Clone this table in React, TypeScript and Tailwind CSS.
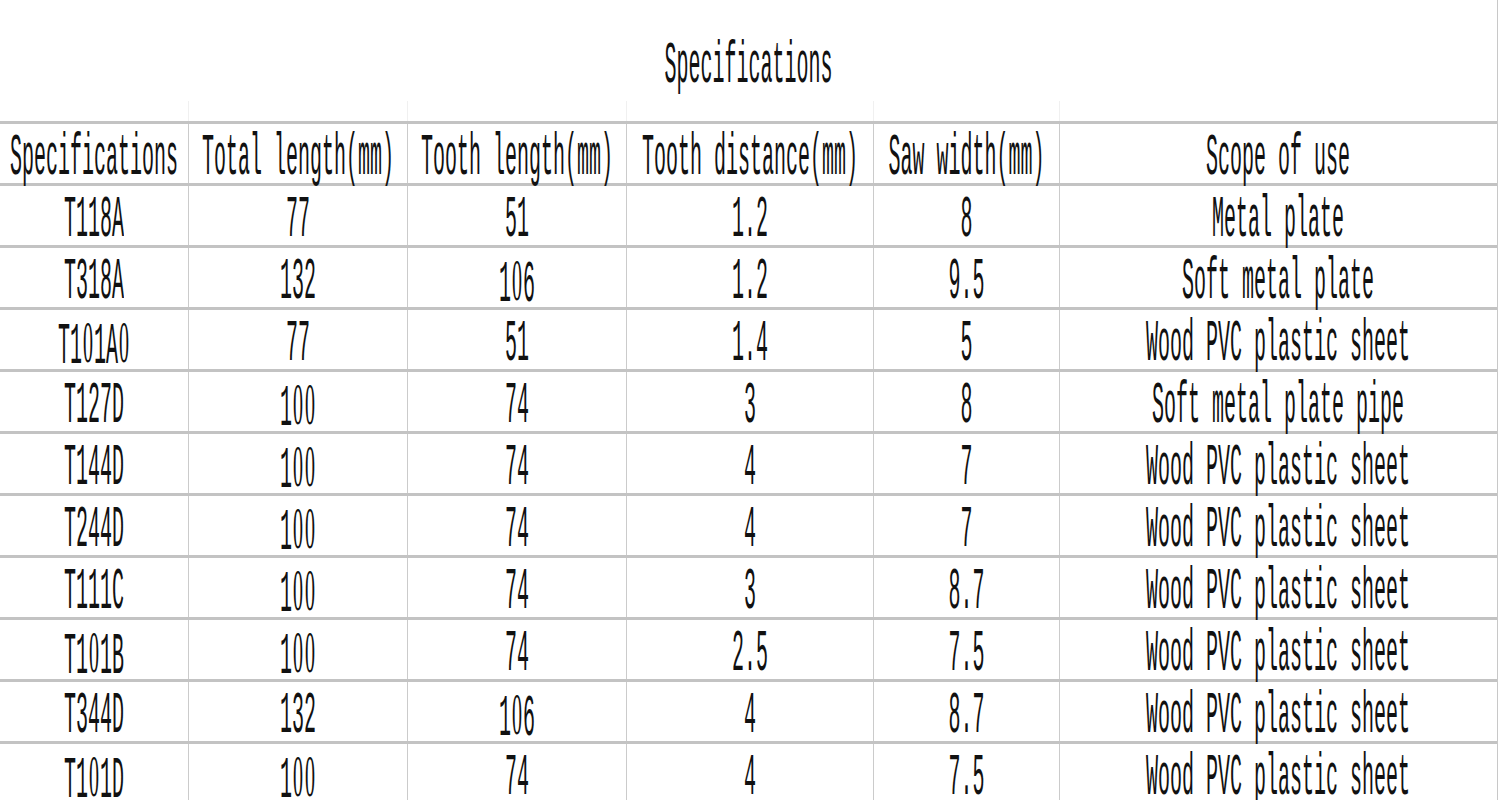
import React from "react";

const cols = ["w-[189px]", "w-[219px]", "w-[219px]", "w-[247px]", "w-[186px]", "w-[436px]"];

const header = [
  "Specifications",
  "Total length(mm)",
  "Tooth length(mm)",
  "Tooth distance(mm)",
  "Saw width(mm)",
  "Scope of use",
];

const rows: string[][] = [
  ["T118A", "77", "51", "1.2", "8", "Metal plate"],
  ["T318A", "132", "106", "1.2", "9.5", "Soft metal plate"],
  ["T101A0", "77", "51", "1.4", "5", "Wood PVC plastic sheet"],
  ["T127D", "100", "74", "3", "8", "Soft metal plate pipe"],
  ["T144D", "100", "74", "4", "7", "Wood PVC plastic sheet"],
  ["T244D", "100", "74", "4", "7", "Wood PVC plastic sheet"],
  ["T111C", "100", "74", "3", "8.7", "Wood PVC plastic sheet"],
  ["T101B", "100", "74", "2.5", "7.5", "Wood PVC plastic sheet"],
  ["T344D", "132", "106", "4", "8.7", "Wood PVC plastic sheet"],
  ["T101D", "100", "74", "4", "7.5", "Wood PVC plastic sheet"],
];

function Txt({ children }: { children: string }) {
  const parts = children.split(/(0)/);
  return (
    <span
      className="inline-block scale-y-[3] whitespace-pre text-[20px] leading-[16px] text-[#111]"
      style={{ fontFamily: '"Liberation Mono", "Courier New", monospace' }}
    >
      {parts.map((p, i) =>
        p === "0" ? (
          <span
            key={i}
            className="px-[1px] align-[0.4px]"
            style={{ fontFamily: '"Liberation Serif", "Times New Roman", serif' }}
          >
            0
          </span>
        ) : (
          <React.Fragment key={i}>{p}</React.Fragment>
        )
      )}
    </span>
  );
}

function Row({ cells }: { cells: string[] }) {
  return (
    <div className="flex h-[62px] shrink-0 border-t-[3px] border-[#c3c3c3]">
      {cells.map((c, i) => (
        <div
          key={i}
          className={`${cols[i]} flex shrink-0 items-center justify-center pt-[10px] ${
            i < cells.length - 1 ? "border-r border-[#cbcbcb]" : ""
          }`}
        >
          <Txt>{c}</Txt>
        </div>
      ))}
    </div>
  );
}

export default function App() {
  return (
    <div className="h-[800px] w-[1500px] overflow-hidden bg-white">
      <div className="flex h-full w-[1498px] flex-col border-r border-[#c8c8c8]">
        <div className="flex h-[121px] shrink-0 flex-col">
          <div className="flex flex-1 items-center justify-center pt-[33px]">
            <Txt>Specifications</Txt>
          </div>
          <div className="flex h-[20px]">
            {cols.map((w, i) => (
              <div
                key={i}
                className={`${w} shrink-0 ${i < cols.length - 1 ? "border-r border-[#f0f0f0]" : ""}`}
              />
            ))}
          </div>
        </div>
        <Row cells={header} />
        {rows.map((r, i) => (
          <Row key={i} cells={r} />
        ))}
      </div>
    </div>
  );
}
